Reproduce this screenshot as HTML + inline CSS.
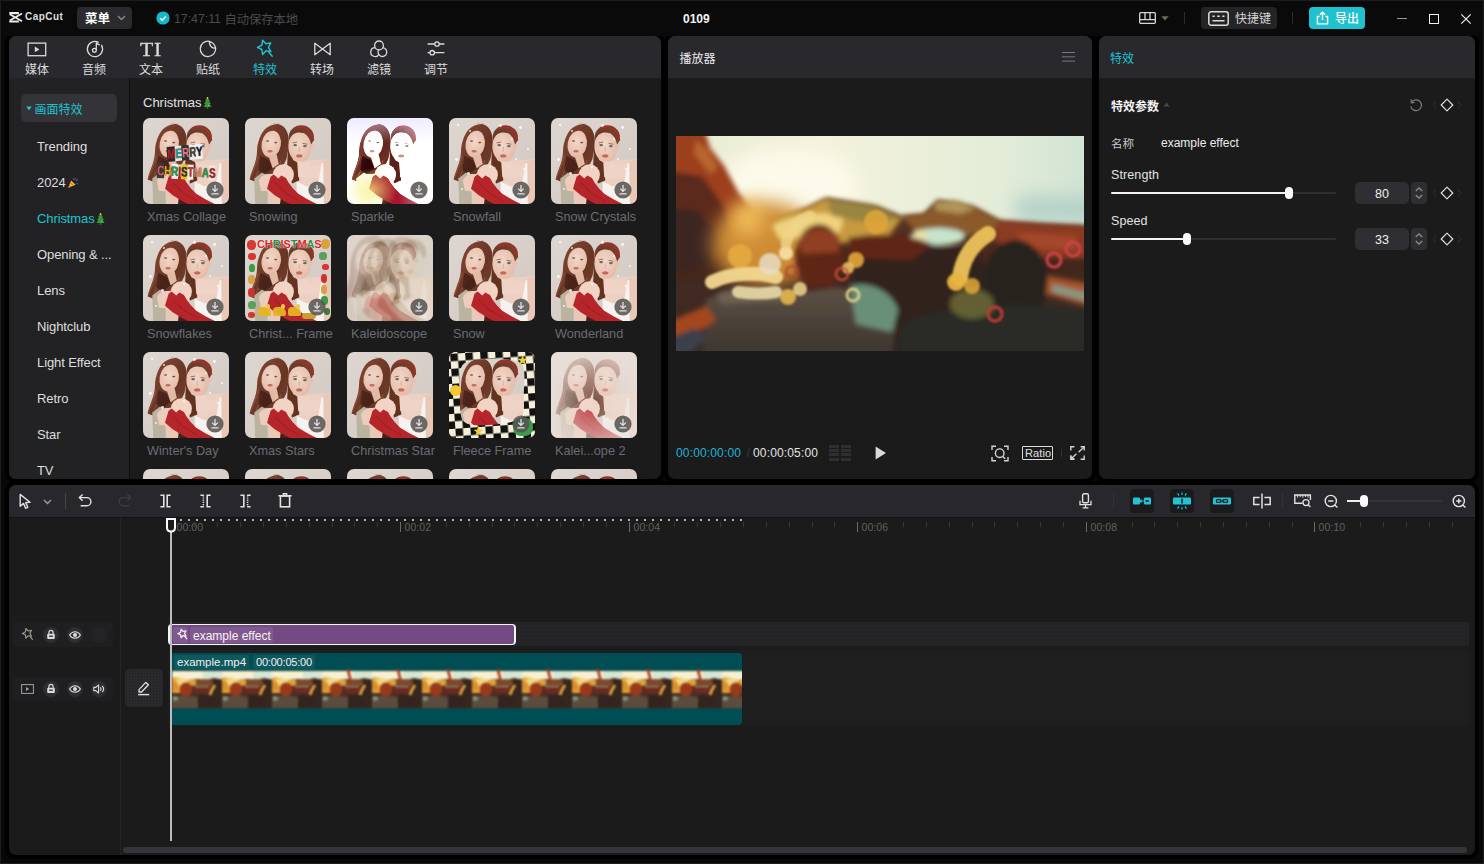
<!DOCTYPE html>
<html lang="zh"><head><meta charset="utf-8"><title>CapCut</title>
<style>
*{box-sizing:border-box;margin:0;padding:0}
html,body{width:1484px;height:864px;overflow:hidden;background:#080808}
body{position:relative;font-family:"Liberation Sans","Noto Sans CJK SC",sans-serif;font-size:13px;color:#e6e6e6;-webkit-font-smoothing:antialiased}
.abs{position:absolute}
.t{position:absolute;white-space:nowrap;line-height:1}
.cjk{font-family:"Liberation Sans","Noto Sans CJK SC",sans-serif}
svg{position:absolute;overflow:visible}
#titlebar{left:0;top:0;width:1484px;height:36px;background:#0a0a0a;z-index:5}
#frame{left:0;top:0;width:1484px;height:864px;border:1px solid #1d1d1d;border-top:1px solid #1c1c1c;pointer-events:none;z-index:50}
.panel{position:absolute;background:#1b1b1c;border-radius:7px;overflow:hidden;box-shadow:0 0 0 4px #000}
.phead{position:absolute;left:0;top:0;right:0;height:42px;background:#29292d}
.cy{color:#21c3d3}
</style></head><body>

<div id="titlebar" class="abs">
  <svg style="left:8.600px;top:11.600px" width="14" height="11" viewBox="0 0 14 11"><path d="M0.300 1.100h9.600M0.300 9.500h9.600" stroke="#ececec" stroke-width="2.200" fill="none"/><path d="M0.800 2.200L13 9.200M0.800 8.400L13 1.400" stroke="#ececec" stroke-width="1.700" fill="none"/></svg>
  <div class="t" style="left:25px;top:12.300px;font-size:10px;font-weight:700;color:#dedede;letter-spacing:0.450px">CapCut</div>
  <div class="abs" style="left:77px;top:7px;width:55px;height:22px;background:#2b2b2f;border-radius:4px"></div>
  <div class="t cjk" style="left:85px;top:13px;font-size:12.500px;font-weight:700;color:#fff">菜单</div>
  <svg style="left:117px;top:15px" width="9" height="6" viewBox="0 0 9 6"><path d="M1 1l3.5 3.5L8 1" fill="none" stroke="#8a8a8e" stroke-width="1.4"/></svg>
  <svg style="left:156px;top:11px" width="14" height="14" viewBox="0 0 14 14"><circle cx="7" cy="7" r="6.6" fill="#17b9cb"/><path d="M4.2 7.2l2 2 3.6-3.8" fill="none" stroke="#fff" stroke-width="1.4"/></svg>
  <div class="t" style="left:174px;top:12.500px;font-size:12.300px;color:#4b4b50">17:47:11 <span class="cjk" style="position:relative;top:1px">自动保存本地</span></div>
  <div class="t" style="left:683px;top:13.200px;font-size:12px;font-weight:700;color:#f2f2f2">0109</div>
  <!-- layout icon -->
  <svg style="left:1139px;top:12px" width="17" height="12" viewBox="0 0 17 12"><rect x="0.7" y="0.7" width="15.6" height="10.6" rx="1" fill="none" stroke="#d8d8d8" stroke-width="1.3"/><path d="M0.700 7.600h15.600M6 0.700v6.900M11 0.700v6.900" stroke="#d8d8d8" stroke-width="1.3" fill="none"/></svg>
  <svg style="left:1161px;top:16px" width="8" height="5" viewBox="0 0 8 5"><path d="M0.3 0.3h7.4L4 4.6z" fill="#6f6a55"/></svg>
  <div class="abs" style="left:1184px;top:12px;width:1px;height:12px;background:#2c2c2c"></div>
  <div class="abs" style="left:1201px;top:7px;width:76px;height:22px;background:#242427;border-radius:4px"></div>
  <svg style="left:1208px;top:11px" width="21" height="15" viewBox="0 0 21 15"><rect x="0.8" y="0.8" width="19.4" height="13.4" rx="2.3" fill="none" stroke="#dcdcdc" stroke-width="1.5"/><path d="M4.5 5.3h2.2M9.2 5.3h2.6M14.3 5.3h2.2M4.5 9.7h12" stroke="#dcdcdc" stroke-width="1.5" fill="none"/></svg>
  <div class="t cjk" style="left:1235px;top:13px;font-size:12px;color:#d4d4d4">快捷键</div>
  <div class="abs" style="left:1292px;top:12px;width:1px;height:12px;background:#2c2c2c"></div>
  <div class="abs" style="left:1309px;top:7px;width:56px;height:22px;background:#1fc0cf;border-radius:4px"></div>
  <svg style="left:1316px;top:11px" width="13" height="14" viewBox="0 0 13 14"><path d="M3.5 5.5H1.4v7.4h10.2V5.5H9.5" fill="none" stroke="#fff" stroke-width="1.4"/><path d="M6.5 9V1.5M3.8 3.8L6.5 1.2l2.7 2.6" fill="none" stroke="#fff" stroke-width="1.4"/></svg>
  <div class="t cjk" style="left:1335px;top:13px;font-size:12px;color:#fff;font-weight:500">导出</div>
  <div class="abs" style="left:1397px;top:18px;width:10px;height:1px;background:#9a9a9a"></div>
  <div class="abs" style="left:1429px;top:14px;width:10px;height:10px;border:1.3px solid #f0f0f0"></div>
  <svg style="left:1461px;top:14px" width="10" height="10" viewBox="0 0 10 10"><path d="M0.3 0.3l9.4 9.4M9.7 0.3L0.3 9.7" stroke="#f0f0f0" stroke-width="1.2"/></svg>
</div>
<div id="frame" class="abs"></div>


<svg width="0" height="0" style="position:absolute"><defs>
<linearGradient id="gbg" x1="0" y1="0" x2="1" y2="1"><stop offset="0" stop-color="#ded6d0"/><stop offset="1" stop-color="#d2c8c2"/></linearGradient>
<linearGradient id="gh1" x1="0" y1="0" x2="1" y2="1"><stop offset="0" stop-color="#8a4c36"/><stop offset="0.6" stop-color="#683424"/><stop offset="1" stop-color="#7a4530"/></linearGradient>
<radialGradient id="gsk" cx="0.45" cy="0.4" r="0.7"><stop offset="0" stop-color="#f3d6c8"/><stop offset="1" stop-color="#e2b8a4"/></radialGradient>
<symbol id="girl" viewBox="0 0 86 86">
<rect width="86" height="86" fill="url(#gbg)"/>
<path d="M53 43L86 41V86H50z" fill="#ecd0c2"/>
<ellipse cx="56" cy="19.500" rx="12.300" ry="11.500" fill="#70402c"/>
<path d="M43.500 20l4.500 22 5 3 1 17-7 3-5-14z" fill="#63331f"/>
<path d="M50 11.200C57 7.600 66 11.500 67.600 22.500" fill="none" stroke="#a82c28" stroke-width="2" stroke-linecap="round"/>
<ellipse cx="54.500" cy="29.300" rx="11.200" ry="15" fill="url(#gsk)" transform="rotate(-5 54.500 29.300)"/>
<path d="M44.500 22c2-6 8-8 14-6l-2-3-8 0-4 4z" fill="#6b3a28"/>
<circle cx="66.300" cy="29" r="1.800" fill="#e6bfae"/>
<path d="M52 43.500l9 0.500 5 5 20-6v16H53z" fill="#eed3c6"/>
<path d="M76 44L86 41v45H77z" fill="#e9c8b8"/>
<path d="M51.400 63l10 5 11-3 3.500-20 1.600 0.300L78 86H52z" fill="#f5f2f0"/>
<path d="M28 6.500c8-0.800 14.500 4 15.500 13.500l-0.500 13-1.500 8-4 8-8 6-9 2-6 3-4 3-5-2c2-9 6-15 7-24 0.500-5 0-9 2-14 3-9 7-16 21-16.500z" fill="url(#gh1)"/>
<path d="M14 38c-2 8-5 14-8 22M18 40c-1 8-4 12-6 18M36 42c0 4-2 6-4 8" stroke="#9a6248" stroke-width="0.900" fill="none" opacity=".7"/>
<path d="M10 60l8-6 6 3-1 29H11z" fill="#b9b39f"/>
<ellipse cx="26.600" cy="26.500" rx="9.400" ry="13.200" fill="url(#gsk)" transform="rotate(10 26.600 26.500)"/>
<path d="M16 38l8 4 4 8-8 6-6-4z" fill="#3f1d15" opacity=".75"/><path d="M24 38l8-1 2 9-6 4z" fill="#e3baa6"/>
<ellipse cx="34" cy="72" rx="11" ry="18" fill="#ebc8b6" transform="rotate(4 34 72)"/>
<circle cx="38.500" cy="56.500" r="10.300" fill="#f2d3c4"/>
<path d="M14.500 62c2-5 8-7 13-6l4 9-5 8-10-1z" fill="#edccbc"/>
<path d="M36 78h14l2 9H35z" fill="#47201a"/>
<path d="M26 58.500L29 56.200 33.500 60 36.500 57.200 41 59.500 43.500 64 47.500 69.500 53 75 62 80.500 74 86.500H48L40 82.500 30 76.500 22.500 70z" fill="#b6252a"/>
<path d="M30 64l10 10 14 8" stroke="#8e1c22" stroke-width="1" fill="none" opacity=".55"/>
<ellipse cx="50" cy="27.500" rx="1.800" ry="1.100" fill="#5b6e66"/><ellipse cx="59.500" cy="28.500" rx="1.800" ry="1.100" fill="#5b6e66"/>
<path d="M47.500 25.300l4.500-0.800M57.300 25.800l4.500 0.800" stroke="#7a4a38" stroke-width="0.700"/>
<ellipse cx="54" cy="38" rx="3" ry="1.500" fill="#c8665b"/>
<path d="M54 29v5" stroke="#dcae9a" stroke-width="1"/>
<ellipse cx="23" cy="23.500" rx="1.600" ry="0.800" fill="#6e5244"/><ellipse cx="31" cy="25" rx="1.500" ry="0.800" fill="#6e5244"/>
<ellipse cx="25.500" cy="33.500" rx="2.600" ry="1.200" fill="#c8695d"/>
</symbol>
<symbol id="dl" viewBox="0 0 18 18"><circle cx="9" cy="9" r="8.600" fill="#55524f" fill-opacity="0.860"/><path d="M9 4v6M6.200 7.600L9 10.400l2.800-2.800M5.400 12.800h7.200" fill="none" stroke="#e2e2e2" stroke-width="1.300"/></symbol>
</defs></svg><div class="panel" style="left:9px;top:36px;width:652px;height:443px"><div class="phead"></div><svg style="left:18px;top:5.5px" width="20" height="15" viewBox="0 0 20 15"><rect x="1.1" y="1.1" width="17.6" height="12.6" fill="none" stroke="#dadada" stroke-width="1.3"/><path d="M7.8 4.6v5.6l4.6-2.8z" fill="#dadada"/></svg><svg style="left:76px;top:3px" width="20" height="20" viewBox="0 0 20 20"><path d="M13.2 3.2A7.6 7.6 0 1 0 16.6 6.4" fill="none" stroke="#dadada" stroke-width="1.3" stroke-linecap="round"/><circle cx="9.4" cy="11.2" r="1.9" fill="none" stroke="#dadada" stroke-width="1.3"/><path d="M11.3 11.2V3.4c0.8 1.6 2 2.2 3.6 2.4" fill="none" stroke="#dadada" stroke-width="1.3"/></svg><div class="t" style="left:131px;top:3.100px;font-family:'Liberation Serif',serif;font-size:18.600px;color:#dadada;letter-spacing:0.800px;line-height:22px;transform:scaleX(1.160);transform-origin:0 0;-webkit-text-stroke:0.300px #dadada">TI</div><svg style="left:189px;top:3px" width="20" height="20" viewBox="0 0 20 20"><path d="M11.2 2.3A7.7 7.7 0 1 0 17.6 9" fill="none" stroke="#dadada" stroke-width="1.3"/><path d="M11.2 2.3c2.8 0.6 5.6 3.4 6.4 6.7-3.4 0.6-6.2-1.8-6.4-6.7z" fill="none" stroke="#dadada" stroke-width="1.3" stroke-linejoin="round"/></svg><svg style="left:245px;top:2px" width="22" height="22" viewBox="0 0 22 22"><path d="M8.6 2.2l3.3 3.6 4.9-0.9-2.3 4.4 2.4 4.3-4.9-0.8-3.4 3.6-0.7-4.9-4.5-2.1 4.5-2.2z" fill="none" stroke="#1fc3d3" stroke-width="1.4" stroke-linejoin="round"/><path d="M14.8 14.2l3.4 4" stroke="#1fc3d3" stroke-width="1.4" stroke-linecap="round"/></svg><svg style="left:304px;top:5px" width="19" height="16" viewBox="0 0 19 16"><path d="M1.8 2.2v11.6l7.7-5.8zM17.2 2.2v11.6L9.5 8z" fill="none" stroke="#dadada" stroke-width="1.3" stroke-linejoin="round"/></svg><svg style="left:360px;top:2px" width="20" height="20" viewBox="0 0 20 20"><circle cx="10" cy="7.4" r="4.4" fill="none" stroke="#dadada" stroke-width="1.3"/><path d="M6.2 9.7A4.4 4.4 0 1 0 10 16.2" fill="none" stroke="#dadada" stroke-width="1.3"/><path d="M13.8 9.7A4.4 4.4 0 1 1 10 11.3" fill="none" stroke="#dadada" stroke-width="1.3"/></svg><svg style="left:417px;top:3px" width="20" height="20" viewBox="0 0 20 20"><path d="M1.6 5h7.2M13.2 5h5.2M1.6 13.7h2.4M8.4 13.7h10" stroke="#dadada" stroke-width="1.3" fill="none"/><circle cx="11" cy="5" r="2.2" fill="none" stroke="#dadada" stroke-width="1.3"/><circle cx="6.2" cy="13.7" r="2.2" fill="none" stroke="#dadada" stroke-width="1.3"/></svg><div class="t cjk" style="left:16px;top:28px;font-size:12px;color:#dcdcdc;width:24px;text-align:center">媒体</div><div class="t cjk" style="left:73px;top:28px;font-size:12px;color:#dcdcdc;width:24px;text-align:center">音频</div><div class="t cjk" style="left:130px;top:28px;font-size:12px;color:#dcdcdc;width:24px;text-align:center">文本</div><div class="t cjk" style="left:187px;top:28px;font-size:12px;color:#dcdcdc;width:24px;text-align:center">贴纸</div><div class="t cjk" style="left:244px;top:28px;font-size:12px;color:#21c3d3;width:24px;text-align:center">特效</div><div class="t cjk" style="left:301px;top:28px;font-size:12px;color:#dcdcdc;width:24px;text-align:center">转场</div><div class="t cjk" style="left:358px;top:28px;font-size:12px;color:#dcdcdc;width:24px;text-align:center">滤镜</div><div class="t cjk" style="left:415px;top:28px;font-size:12px;color:#dcdcdc;width:24px;text-align:center">调节</div><div class="abs" style="left:0;top:42px;width:120px;height:401px;background:#222225"></div><div class="abs" style="left:120px;top:42px;width:1px;height:401px;background:#0e0e0f"></div><div class="abs" style="left:12px;top:58px;width:96px;height:28px;background:#333338;border-radius:5px"></div><svg style="left:17px;top:70px" width="6" height="5" viewBox="0 0 6 5"><path d="M0.3 0.5h5.4L3 4.6z" fill="#21c3d3"/></svg><div class="t cjk cy" style="left:25.500px;top:67.500px;font-size:12px">画面特效</div><div class="t" style="left:28px;top:103.3px;font-size:13px;color:#dedede;line-height:15px;letter-spacing:-0.100px">Trending</div><div class="t" style="left:28px;top:139.3px;font-size:13px;color:#dedede;line-height:15px;letter-spacing:-0.100px">2024<svg style="position:relative;display:inline-block;vertical-align:-2px;margin-left:1px" width="12" height="12" viewBox="0 0 12 12"><path d="M1 11L4.2 3.4l4.4 4.4z" fill="#f2b632"/><path d="M2.2 8.2l1.6 1.6M3.3 5.6l3 3" stroke="#d9542b" stroke-width="0.9"/><path d="M6.5 1.2l0.8 2M9 3.5l2-0.8M9.6 6.4l1.6 0.6" stroke="#3b7de0" stroke-width="1"/><circle cx="8.6" cy="1.6" r="0.7" fill="#e23b3b"/></svg></div><div class="t" style="left:28px;top:175.3px;font-size:13px;color:#21c3d3;line-height:15px;letter-spacing:-0.100px">Christmas<svg style="position:relative;display:inline-block;vertical-align:-2px;margin-left:1px" width="9" height="12" viewBox="0 0 9 12"><path d="M4.5 0.5L7 4H6l2 3H6.6L8.6 10H0.4L2.4 7H1l2-3H2z" fill="#2f9a3f"/><rect x="3.6" y="10" width="1.8" height="1.8" fill="#7a4a22"/><circle cx="4.5" cy="1" r="0.9" fill="#f4c531"/><circle cx="3.4" cy="5.6" r="0.6" fill="#e23b3b"/><circle cx="5.8" cy="8.3" r="0.6" fill="#f4c531"/></svg></div><div class="t" style="left:28px;top:211.3px;font-size:13px;color:#dedede;line-height:15px;letter-spacing:-0.100px">Opening &amp; ...</div><div class="t" style="left:28px;top:247.3px;font-size:13px;color:#dedede;line-height:15px;letter-spacing:-0.100px">Lens</div><div class="t" style="left:28px;top:283.3px;font-size:13px;color:#dedede;line-height:15px;letter-spacing:-0.100px">Nightclub</div><div class="t" style="left:28px;top:319.3px;font-size:13px;color:#dedede;line-height:15px;letter-spacing:-0.100px">Light Effect</div><div class="t" style="left:28px;top:355.3px;font-size:13px;color:#dedede;line-height:15px;letter-spacing:-0.100px">Retro</div><div class="t" style="left:28px;top:391.3px;font-size:13px;color:#dedede;line-height:15px;letter-spacing:-0.100px">Star</div><div class="t" style="left:28px;top:427.3px;font-size:13px;color:#dedede;line-height:15px;letter-spacing:-0.100px">TV</div><div class="t" style="left:134px;top:59px;font-size:13px;color:#e2e2e2;line-height:15px">Christmas<svg style="position:relative;display:inline-block;vertical-align:-2px;margin-left:1px" width="9" height="12" viewBox="0 0 9 12"><path d="M4.5 0.5L7 4H6l2 3H6.6L8.6 10H0.4L2.4 7H1l2-3H2z" fill="#2f9a3f"/><rect x="3.6" y="10" width="1.8" height="1.8" fill="#7a4a22"/><circle cx="4.5" cy="1" r="0.9" fill="#f4c531"/><circle cx="3.4" cy="5.6" r="0.6" fill="#e23b3b"/><circle cx="5.8" cy="8.3" r="0.6" fill="#f4c531"/></svg></div><div class="abs" style="left:134px;top:82px;width:86px;height:86px;overflow:hidden;border-radius:7px 7px 7px 7px"><svg style="left:-1px;top:-1px;filter:blur(0.550px)" width="88" height="88"><use href="#girl" width="88" height="88"/></svg><div class="t" style="left:24px;top:29.500px;font-size:13.500px;font-weight:700;line-height:13px;transform:scaleX(0.740) rotate(-4deg);transform-origin:0 50%;text-shadow:0 0 1px #222"><span style="color:#b8222a;background:#2a2a2a">M</span><span style="color:#2a9a9a;background:#f0e8e0">E</span><span style="color:#e07a8a;background:#333">R</span><span style="color:#444;background:#eee">R</span><span style="color:#1c2230;background:#f2f2f2">Y</span></div><div class="t" style="left:14px;top:46px;font-size:13.500px;font-weight:700;line-height:13px;transform:scaleX(0.730) rotate(2deg);transform-origin:0 50%;text-shadow:0 0 1px #222"><span style="color:#e0596a;background:#3a3a3a">C</span><span style="color:#e9b21f">H</span><span style="color:#2a9a4a;background:#eee">R</span><span style="color:#c22">I</span><span style="color:#333;background:#e9c51f">S</span><span style="color:#c33;background:#eee">T</span><span style="color:#e8866a">M</span><span style="color:#2a9a4a">A</span><span style="color:#b22;background:#f0e8e0">S</span></div><svg style="left:63px;top:63px" width="18" height="18"><use href="#dl" width="18" height="18"/></svg></div><div class="t" style="left:138px;top:174px;font-size:12.700px;color:#6b6b73;line-height:15px">Xmas Collage</div><div class="abs" style="left:236px;top:82px;width:86px;height:86px;overflow:hidden;border-radius:7px 7px 7px 7px"><svg style="left:-1px;top:-1px;filter:blur(0.550px)" width="88" height="88"><use href="#girl" width="88" height="88"/></svg><svg style="left:63px;top:63px" width="18" height="18"><use href="#dl" width="18" height="18"/></svg></div><div class="t" style="left:240px;top:174px;font-size:12.700px;color:#6b6b73;line-height:15px">Snowing</div><div class="abs" style="left:338px;top:82px;width:86px;height:86px;overflow:hidden;border-radius:7px 7px 7px 7px"><svg style="left:-1px;top:-1px;filter:blur(0.500px) contrast(1.400) brightness(1.360) saturate(0.550) hue-rotate(-8deg)" width="88" height="88"><use href="#girl" width="88" height="88"/></svg><div class="abs" style="left:0;top:0;width:86px;height:86px;border-radius:7px;background:radial-gradient(ellipse 26px 22px at 24px 72px,rgba(248,240,130,.750),transparent),linear-gradient(180deg,rgba(225,215,255,.500),transparent 30%),linear-gradient(90deg,transparent 60%,rgba(255,255,255,.600))"></div><svg style="left:63px;top:63px" width="18" height="18"><use href="#dl" width="18" height="18"/></svg></div><div class="t" style="left:342px;top:174px;font-size:12.700px;color:#6b6b73;line-height:15px">Sparkle</div><div class="abs" style="left:440px;top:82px;width:86px;height:86px;overflow:hidden;border-radius:7px 7px 7px 7px"><svg style="left:-1px;top:-1px;filter:blur(0.550px)" width="88" height="88"><use href="#girl" width="88" height="88"/></svg><div class="abs" style="left:8px;top:6px;width:1.5px;height:1.5px;border-radius:50%;background:rgba(255,255,255,.800)"></div><div class="abs" style="left:20px;top:12px;width:2.2px;height:2.2px;border-radius:50%;background:rgba(255,255,255,.800)"></div><div class="abs" style="left:70px;top:8px;width:2.9px;height:2.9px;border-radius:50%;background:rgba(255,255,255,.800)"></div><div class="abs" style="left:62px;top:20px;width:1.5px;height:1.5px;border-radius:50%;background:rgba(255,255,255,.800)"></div><div class="abs" style="left:78px;top:30px;width:2.2px;height:2.2px;border-radius:50%;background:rgba(255,255,255,.800)"></div><div class="abs" style="left:6px;top:40px;width:2.9px;height:2.9px;border-radius:50%;background:rgba(255,255,255,.800)"></div><div class="abs" style="left:74px;top:50px;width:1.5px;height:1.5px;border-radius:50%;background:rgba(255,255,255,.800)"></div><div class="abs" style="left:12px;top:70px;width:2.2px;height:2.2px;border-radius:50%;background:rgba(255,255,255,.800)"></div><div class="abs" style="left:50px;top:6px;width:2.9px;height:2.9px;border-radius:50%;background:rgba(255,255,255,.800)"></div><div class="abs" style="left:40px;top:48px;width:1.5px;height:1.5px;border-radius:50%;background:rgba(255,255,255,.800)"></div><div class="abs" style="left:66px;top:40px;width:2.2px;height:2.2px;border-radius:50%;background:rgba(255,255,255,.800)"></div><div class="abs" style="left:18px;top:54px;width:2.9px;height:2.9px;border-radius:50%;background:rgba(255,255,255,.800)"></div><svg style="left:63px;top:63px" width="18" height="18"><use href="#dl" width="18" height="18"/></svg></div><div class="t" style="left:444px;top:174px;font-size:12.700px;color:#6b6b73;line-height:15px">Snowfall</div><div class="abs" style="left:542px;top:82px;width:86px;height:86px;overflow:hidden;border-radius:7px 7px 7px 7px"><svg style="left:-1px;top:-1px;filter:blur(0.550px)" width="88" height="88"><use href="#girl" width="88" height="88"/></svg><div class="abs" style="left:8px;top:6px;width:1.5px;height:1.5px;border-radius:50%;background:rgba(255,255,255,.800)"></div><div class="abs" style="left:20px;top:12px;width:2.2px;height:2.2px;border-radius:50%;background:rgba(255,255,255,.800)"></div><div class="abs" style="left:70px;top:8px;width:2.9px;height:2.9px;border-radius:50%;background:rgba(255,255,255,.800)"></div><div class="abs" style="left:62px;top:20px;width:1.5px;height:1.5px;border-radius:50%;background:rgba(255,255,255,.800)"></div><div class="abs" style="left:78px;top:30px;width:2.2px;height:2.2px;border-radius:50%;background:rgba(255,255,255,.800)"></div><div class="abs" style="left:6px;top:40px;width:2.9px;height:2.9px;border-radius:50%;background:rgba(255,255,255,.800)"></div><div class="abs" style="left:74px;top:50px;width:1.5px;height:1.5px;border-radius:50%;background:rgba(255,255,255,.800)"></div><div class="abs" style="left:12px;top:70px;width:2.2px;height:2.2px;border-radius:50%;background:rgba(255,255,255,.800)"></div><div class="abs" style="left:50px;top:6px;width:2.9px;height:2.9px;border-radius:50%;background:rgba(255,255,255,.800)"></div><div class="abs" style="left:40px;top:48px;width:1.5px;height:1.5px;border-radius:50%;background:rgba(255,255,255,.800)"></div><div class="abs" style="left:66px;top:40px;width:2.2px;height:2.2px;border-radius:50%;background:rgba(255,255,255,.800)"></div><div class="abs" style="left:18px;top:54px;width:2.9px;height:2.9px;border-radius:50%;background:rgba(255,255,255,.800)"></div><svg style="left:63px;top:63px" width="18" height="18"><use href="#dl" width="18" height="18"/></svg></div><div class="t" style="left:546px;top:174px;font-size:12.700px;color:#6b6b73;line-height:15px">Snow Crystals</div><div class="abs" style="left:134px;top:199px;width:86px;height:86px;overflow:hidden;border-radius:7px 7px 7px 7px"><svg style="left:-1px;top:-1px;filter:blur(0.550px)" width="88" height="88"><use href="#girl" width="88" height="88"/></svg><div class="abs" style="left:8px;top:6px;width:1.5px;height:1.5px;border-radius:50%;background:rgba(255,255,255,.800)"></div><div class="abs" style="left:20px;top:12px;width:2.2px;height:2.2px;border-radius:50%;background:rgba(255,255,255,.800)"></div><div class="abs" style="left:70px;top:8px;width:2.9px;height:2.9px;border-radius:50%;background:rgba(255,255,255,.800)"></div><div class="abs" style="left:62px;top:20px;width:1.5px;height:1.5px;border-radius:50%;background:rgba(255,255,255,.800)"></div><div class="abs" style="left:78px;top:30px;width:2.2px;height:2.2px;border-radius:50%;background:rgba(255,255,255,.800)"></div><div class="abs" style="left:6px;top:40px;width:2.9px;height:2.9px;border-radius:50%;background:rgba(255,255,255,.800)"></div><div class="abs" style="left:74px;top:50px;width:1.5px;height:1.5px;border-radius:50%;background:rgba(255,255,255,.800)"></div><div class="abs" style="left:12px;top:70px;width:2.2px;height:2.2px;border-radius:50%;background:rgba(255,255,255,.800)"></div><div class="abs" style="left:50px;top:6px;width:2.9px;height:2.9px;border-radius:50%;background:rgba(255,255,255,.800)"></div><div class="abs" style="left:40px;top:48px;width:1.5px;height:1.5px;border-radius:50%;background:rgba(255,255,255,.800)"></div><div class="abs" style="left:66px;top:40px;width:2.2px;height:2.2px;border-radius:50%;background:rgba(255,255,255,.800)"></div><div class="abs" style="left:18px;top:54px;width:2.9px;height:2.9px;border-radius:50%;background:rgba(255,255,255,.800)"></div><svg style="left:63px;top:63px" width="18" height="18"><use href="#dl" width="18" height="18"/></svg></div><div class="t" style="left:138px;top:291px;font-size:12.700px;color:#6b6b73;line-height:15px">Snowflakes</div><div class="abs" style="left:236px;top:199px;width:86px;height:86px;overflow:hidden;border-radius:7px 7px 7px 7px"><svg style="left:-1px;top:-1px;filter:blur(0.550px)" width="88" height="88"><use href="#girl" width="88" height="88"/></svg><div class="t" style="left:12px;top:3.500px;font-size:11px;font-weight:700;letter-spacing:-0.100px;line-height:11px;text-shadow:0 0 1px #fff,0 0 1px #fff"><span style="color:#d42a26">CH</span><span style="color:#2f8a3f">R</span><span style="color:#d42a26">I</span><span style="color:#d42a26">S</span><span style="color:#2f8a3f">T</span><span style="color:#d42a26">M</span><span style="color:#2f8a3f">A</span><span style="color:#d42a26">S</span></div><div class="abs" style="left:2px;top:5px;width:9px;height:10px;border-radius:45%;background:#d63a34"></div><div class="abs" style="left:3px;top:18px;width:8px;height:7px;border-radius:45%;background:#d8352f"></div><div class="abs" style="left:4px;top:29px;width:6px;height:8px;border-radius:45%;background:#3d9a45"></div><div class="abs" style="left:3px;top:40px;width:7px;height:9px;border-radius:45%;background:#d9a04a"></div><div class="abs" style="left:3px;top:53px;width:7px;height:9px;border-radius:45%;background:#c9342f"></div><div class="abs" style="left:3px;top:66px;width:8px;height:8px;border-radius:45%;background:#5aa05a"></div><div class="abs" style="left:3px;top:77px;width:7px;height:6px;border-radius:45%;background:#d8352f"></div><div class="abs" style="left:76px;top:4px;width:9px;height:10px;border-radius:45%;background:#d9a23a"></div><div class="abs" style="left:74px;top:17px;width:8px;height:8px;border-radius:45%;background:#5aa05a"></div><div class="abs" style="left:77px;top:29px;width:7px;height:6px;border-radius:45%;background:#d8352f"></div><div class="abs" style="left:76px;top:39px;width:6px;height:9px;border-radius:45%;background:#c9342f"></div><div class="abs" style="left:76px;top:50px;width:6px;height:9px;border-radius:45%;background:#d9a04a"></div><div class="abs" style="left:76px;top:61px;width:7px;height:9px;border-radius:45%;background:#3d9a45"></div><div class="abs" style="left:79px;top:73px;width:6px;height:7px;border-radius:45%;background:#3d7a3d"></div><div class="abs" style="left:13px;top:72px;width:13px;height:9px;border-radius:4px 6px 2px 2px;background:#e6b422;opacity:.950"></div><div class="abs" style="left:21px;top:69px;width:4px;height:5px;border-radius:2px;background:#efc94a"></div><div class="abs" style="left:28px;top:72px;width:13px;height:9px;border-radius:4px 6px 2px 2px;background:#e6b422;opacity:.950"></div><div class="abs" style="left:36px;top:69px;width:4px;height:5px;border-radius:2px;background:#efc94a"></div><div class="abs" style="left:43px;top:72px;width:13px;height:9px;border-radius:4px 6px 2px 2px;background:#e6b422;opacity:.950"></div><div class="abs" style="left:51px;top:69px;width:4px;height:5px;border-radius:2px;background:#efc94a"></div><div class="abs" style="left:57px;top:78px;width:14px;height:6px;border-radius:3px;background:#c9a030"></div><svg style="left:63px;top:63px" width="18" height="18"><use href="#dl" width="18" height="18"/></svg></div><div class="t" style="left:240px;top:291px;font-size:12.700px;color:#6b6b73;line-height:15px">Christ... Frame</div><div class="abs" style="left:338px;top:199px;width:86px;height:86px;overflow:hidden;border-radius:7px 7px 7px 7px"><svg style="left:-1px;top:-1px;filter:blur(0.550px)" width="88" height="88"><use href="#girl" width="88" height="88"/></svg><svg style="left:-12px;top:-8px;opacity:.450;filter:blur(0.800px)" width="104" height="104"><use href="#girl" width="104" height="104"/></svg><svg style="left:6px;top:-4px;opacity:.300;filter:blur(0.800px) hue-rotate(60deg)" width="92" height="92"><use href="#girl" width="92" height="92"/></svg><div class="abs" style="left:0;top:0;width:86px;height:86px;border-radius:7px;background:rgba(228,212,202,.380)"></div><svg style="left:63px;top:63px" width="18" height="18"><use href="#dl" width="18" height="18"/></svg></div><div class="t" style="left:342px;top:291px;font-size:12.700px;color:#6b6b73;line-height:15px">Kaleidoscope</div><div class="abs" style="left:440px;top:199px;width:86px;height:86px;overflow:hidden;border-radius:7px 7px 7px 7px"><svg style="left:-1px;top:-1px;filter:blur(0.550px)" width="88" height="88"><use href="#girl" width="88" height="88"/></svg><svg style="left:63px;top:63px" width="18" height="18"><use href="#dl" width="18" height="18"/></svg></div><div class="t" style="left:444px;top:291px;font-size:12.700px;color:#6b6b73;line-height:15px">Snow</div><div class="abs" style="left:542px;top:199px;width:86px;height:86px;overflow:hidden;border-radius:7px 7px 7px 7px"><svg style="left:-1px;top:-1px;filter:blur(0.550px)" width="88" height="88"><use href="#girl" width="88" height="88"/></svg><div class="abs" style="left:8px;top:6px;width:1.5px;height:1.5px;border-radius:50%;background:rgba(255,255,255,.800)"></div><div class="abs" style="left:20px;top:12px;width:2.2px;height:2.2px;border-radius:50%;background:rgba(255,255,255,.800)"></div><div class="abs" style="left:70px;top:8px;width:2.9px;height:2.9px;border-radius:50%;background:rgba(255,255,255,.800)"></div><div class="abs" style="left:62px;top:20px;width:1.5px;height:1.5px;border-radius:50%;background:rgba(255,255,255,.800)"></div><div class="abs" style="left:78px;top:30px;width:2.2px;height:2.2px;border-radius:50%;background:rgba(255,255,255,.800)"></div><div class="abs" style="left:6px;top:40px;width:2.9px;height:2.9px;border-radius:50%;background:rgba(255,255,255,.800)"></div><div class="abs" style="left:74px;top:50px;width:1.5px;height:1.5px;border-radius:50%;background:rgba(255,255,255,.800)"></div><div class="abs" style="left:12px;top:70px;width:2.2px;height:2.2px;border-radius:50%;background:rgba(255,255,255,.800)"></div><div class="abs" style="left:50px;top:6px;width:2.9px;height:2.9px;border-radius:50%;background:rgba(255,255,255,.800)"></div><div class="abs" style="left:40px;top:48px;width:1.5px;height:1.5px;border-radius:50%;background:rgba(255,255,255,.800)"></div><div class="abs" style="left:66px;top:40px;width:2.2px;height:2.2px;border-radius:50%;background:rgba(255,255,255,.800)"></div><div class="abs" style="left:18px;top:54px;width:2.9px;height:2.9px;border-radius:50%;background:rgba(255,255,255,.800)"></div><svg style="left:63px;top:63px" width="18" height="18"><use href="#dl" width="18" height="18"/></svg></div><div class="t" style="left:546px;top:291px;font-size:12.700px;color:#6b6b73;line-height:15px">Wonderland</div><div class="abs" style="left:134px;top:316px;width:86px;height:86px;overflow:hidden;border-radius:7px 7px 7px 7px"><svg style="left:-1px;top:-1px;filter:blur(0.550px)" width="88" height="88"><use href="#girl" width="88" height="88"/></svg><div class="abs" style="left:8px;top:6px;width:1.5px;height:1.5px;border-radius:50%;background:rgba(255,255,255,.800)"></div><div class="abs" style="left:20px;top:12px;width:2.2px;height:2.2px;border-radius:50%;background:rgba(255,255,255,.800)"></div><div class="abs" style="left:70px;top:8px;width:2.9px;height:2.9px;border-radius:50%;background:rgba(255,255,255,.800)"></div><div class="abs" style="left:62px;top:20px;width:1.5px;height:1.5px;border-radius:50%;background:rgba(255,255,255,.800)"></div><div class="abs" style="left:78px;top:30px;width:2.2px;height:2.2px;border-radius:50%;background:rgba(255,255,255,.800)"></div><div class="abs" style="left:6px;top:40px;width:2.9px;height:2.9px;border-radius:50%;background:rgba(255,255,255,.800)"></div><div class="abs" style="left:74px;top:50px;width:1.5px;height:1.5px;border-radius:50%;background:rgba(255,255,255,.800)"></div><div class="abs" style="left:12px;top:70px;width:2.2px;height:2.2px;border-radius:50%;background:rgba(255,255,255,.800)"></div><div class="abs" style="left:50px;top:6px;width:2.9px;height:2.9px;border-radius:50%;background:rgba(255,255,255,.800)"></div><div class="abs" style="left:40px;top:48px;width:1.5px;height:1.5px;border-radius:50%;background:rgba(255,255,255,.800)"></div><div class="abs" style="left:66px;top:40px;width:2.2px;height:2.2px;border-radius:50%;background:rgba(255,255,255,.800)"></div><div class="abs" style="left:18px;top:54px;width:2.9px;height:2.9px;border-radius:50%;background:rgba(255,255,255,.800)"></div><svg style="left:63px;top:63px" width="18" height="18"><use href="#dl" width="18" height="18"/></svg></div><div class="t" style="left:138px;top:408px;font-size:12.700px;color:#6b6b73;line-height:15px">Winter's Day</div><div class="abs" style="left:236px;top:316px;width:86px;height:86px;overflow:hidden;border-radius:7px 7px 7px 7px"><svg style="left:-1px;top:-1px;filter:blur(0.550px)" width="88" height="88"><use href="#girl" width="88" height="88"/></svg><svg style="left:63px;top:63px" width="18" height="18"><use href="#dl" width="18" height="18"/></svg></div><div class="t" style="left:240px;top:408px;font-size:12.700px;color:#6b6b73;line-height:15px">Xmas Stars</div><div class="abs" style="left:338px;top:316px;width:86px;height:86px;overflow:hidden;border-radius:7px 7px 7px 7px"><svg style="left:-1px;top:-1px;filter:blur(0.550px)" width="88" height="88"><use href="#girl" width="88" height="88"/></svg><svg style="left:63px;top:63px" width="18" height="18"><use href="#dl" width="18" height="18"/></svg></div><div class="t" style="left:342px;top:408px;font-size:12.700px;color:#6b6b73;line-height:15px">Christmas Star</div><div class="abs" style="left:440px;top:316px;width:86px;height:86px;overflow:hidden;border-radius:7px 7px 7px 7px"><svg style="left:-1px;top:-1px;filter:blur(0.550px)" width="88" height="88"><use href="#girl" width="88" height="88"/></svg><svg style="left:0;top:0" width="86" height="86" viewBox="0 0 86 86"><defs><pattern id="ckp" width="15" height="15" patternUnits="userSpaceOnUse" patternTransform="rotate(-4) translate(1 2)"><rect width="15" height="15" fill="#f3efd8"/><rect width="7.500" height="7.500" fill="#111"/><rect x="7.500" y="7.500" width="7.500" height="7.500" fill="#111"/></pattern></defs><path fill-rule="evenodd" fill="url(#ckp)" d="M0 0H86V86H0zM22 9C40 6 60 6 70 10c6 3 6 12 5 26s2 24-3 30c-6 5-30 8-48 7-10-1-13-6-13-20S9 24 12 16c2-5 5-6 10-7z"/></svg><div class="abs" style="left:1px;top:33px;width:11px;height:11px;border-radius:6px;background:#f2c82a"></div><div class="abs" style="left:64px;top:66px;width:20px;height:18px;border-radius:8px;background:#3b9a4e"></div><div class="t" style="left:68px;top:3px;font-size:11px;color:#f3cf2e">&#9733;</div><div class="t" style="left:24px;top:74px;font-size:11px;color:#f3cf2e">&#9733;</div><svg style="left:63px;top:63px" width="18" height="18"><use href="#dl" width="18" height="18"/></svg></div><div class="t" style="left:444px;top:408px;font-size:12.700px;color:#6b6b73;line-height:15px">Fleece Frame</div><div class="abs" style="left:542px;top:316px;width:86px;height:86px;overflow:hidden;border-radius:7px 7px 7px 7px"><svg style="left:-1px;top:-1px;filter:blur(0.550px)" width="88" height="88"><use href="#girl" width="88" height="88"/></svg><div class="abs" style="left:0;top:0;width:86px;height:86px;border-radius:7px;background:radial-gradient(circle at 50% 60%,rgba(235,220,212,.15),rgba(235,225,218,.8) 75%)"></div><svg style="left:63px;top:63px" width="18" height="18"><use href="#dl" width="18" height="18"/></svg></div><div class="t" style="left:546px;top:408px;font-size:12.700px;color:#6b6b73;line-height:15px">Kalei...ope 2</div><div class="abs" style="left:134px;top:433px;width:86px;height:10px;overflow:hidden;border-radius:7px 7px 0 0"><svg style="left:-1px;top:-1px;filter:blur(0.550px)" width="88" height="88"><use href="#girl" width="88" height="88"/></svg></div><div class="abs" style="left:236px;top:433px;width:86px;height:10px;overflow:hidden;border-radius:7px 7px 0 0"><svg style="left:-1px;top:-1px;filter:blur(0.550px)" width="88" height="88"><use href="#girl" width="88" height="88"/></svg></div><div class="abs" style="left:338px;top:433px;width:86px;height:10px;overflow:hidden;border-radius:7px 7px 0 0"><svg style="left:-1px;top:-1px;filter:blur(0.550px)" width="88" height="88"><use href="#girl" width="88" height="88"/></svg></div><div class="abs" style="left:440px;top:433px;width:86px;height:10px;overflow:hidden;border-radius:7px 7px 0 0"><svg style="left:-1px;top:-1px;filter:blur(0.550px)" width="88" height="88"><use href="#girl" width="88" height="88"/></svg></div><div class="abs" style="left:542px;top:433px;width:86px;height:10px;overflow:hidden;border-radius:7px 7px 0 0"><svg style="left:-1px;top:-1px;filter:blur(0.550px)" width="88" height="88"><use href="#girl" width="88" height="88"/></svg></div></div>
<div class="panel" style="left:668px;top:36px;width:424px;height:443px"><div class="phead"></div><div class="t cjk" style="left:11.500px;top:17px;font-size:12px;color:#ededed">播放器</div><div class="abs" style="left:394px;top:16px;width:13px;height:1.3px;background:#77777b;box-shadow:0 4.3px 0 #77777b,0 8.6px 0 #77777b"></div><div class="abs" style="left:8px;top:100px;width:408px;height:215px;overflow:hidden"><svg style="left:0;top:0" width="408" height="215" viewBox="0 0 408 215" preserveAspectRatio="none">
<defs>
<linearGradient id="vsky" x1="0" y1="0" x2="1" y2="0"><stop offset="0" stop-color="#e6ead0"/><stop offset="0.4" stop-color="#f3f2dc"/><stop offset="0.75" stop-color="#e3ecd8"/><stop offset="1" stop-color="#c9e0d2"/></linearGradient>
<linearGradient id="vgr" x1="0" y1="0" x2="0" y2="1"><stop offset="0.3" stop-color="#6a3a22"/><stop offset="0.55" stop-color="#44281e"/><stop offset="1" stop-color="#332c28"/></linearGradient>
<filter id="vb8" filterUnits="userSpaceOnUse" x="-60" y="-60" width="528" height="335"><feGaussianBlur stdDeviation="9"/></filter>
<filter id="vb4" filterUnits="userSpaceOnUse" x="-60" y="-60" width="528" height="335"><feGaussianBlur stdDeviation="2.6"/></filter>
<filter id="vb2" filterUnits="userSpaceOnUse" x="-60" y="-60" width="528" height="335"><feGaussianBlur stdDeviation="1.1"/></filter>
<linearGradient id="vbd" x1="0" y1="0" x2="0" y2="1"><stop offset="0" stop-color="#5c5044"/><stop offset="0.45" stop-color="#453c34"/><stop offset="1" stop-color="#2c2826"/></linearGradient>
<clipPath id="vcp"><rect width="408" height="215"/></clipPath>
</defs>
<g clip-path="url(#vcp)">
<rect x="-40" y="-40" width="488" height="295" fill="url(#vsky)"/>
<ellipse cx="112" cy="50" rx="70" ry="38" fill="#fcfaea" filter="url(#vb8)"/>
<rect x="340" y="60" width="120" height="26" fill="#b4d2c8" filter="url(#vb8)"/>
<g filter="url(#vb4)">
<path d="M-40 -40H18L34 12 48 30 62 56 80 80 100 84 130 72 150 62 200 70 226 80 248 78 262 64 296 70 326 86 370 88 448 92V260H-40z" fill="url(#vgr)"/>
<path d="M-40 -40H18L34 12 48 30 62 56 80 80 70 100 40 96 -40 84z" fill="#9c3f1d"/>
<path d="M-40 30L26 40 48 70 56 96 20 110 -40 100z" fill="#5c2a1c"/><path d="M-40 70L20 74 44 100 30 130 -40 140z" fill="#3c2822"/>
<path d="M20 4l12 10 10 18-8 6-16-20z" fill="#b8652e"/>
<path d="M-40 100L30 100 52 120 40 170-40 190z" fill="#33262200"/>
</g>
<ellipse cx="90" cy="108" rx="54" ry="42" fill="#cf8c34" filter="url(#vb8)"/>
<ellipse cx="72" cy="82" rx="16" ry="18" fill="#f0bc58" filter="url(#vb8)"/>
<g filter="url(#vb4)">
<path d="M96 84L130 72 150 62 200 70 226 82 214 98 180 106 120 110 100 100z" fill="#c79a40"/>
<path d="M96 90c20-12 50-16 72-10l-4 16-60 8z" fill="#f0d27e"/>
<path d="M150 62l50 8 26 12-30 6-40-8z" fill="#9a8540"/>
<path d="M226 80L248 78 262 64 296 70 326 86 310 100 240 96z" fill="#8a5a2c"/>
<path d="M258 66l22-2 20 8-16 6-24-4z" fill="#b09458"/>
<path d="M322 84L370 88 448 92V124L352 120 318 104z" fill="#8a3a22"/>
<path d="M340 96l60 4v14l-50-2z" fill="#a4462a"/>
<ellipse cx="262" cy="100.500" rx="27" ry="8.500" fill="#c6e4cc"/>
<ellipse cx="244" cy="100" rx="8" ry="6" fill="#e6e2a8"/>
<path d="M186 106L300 112 318 150 300 260H200L174 150z" fill="#33231d"/>
<path d="M172 102c30-6 64-4 84 6l-20 16-62-2z" fill="#5e2618"/>
<ellipse cx="143" cy="121" rx="24" ry="33" fill="#5e2616"/>
<path d="M122 104c8-13 32-15 42-2l-2 14-36 2z" fill="#904020"/>
<path d="M126 150h36v30h-36z" fill="#4a2418"/>
<path d="M30 164c30-14 66-14 98-8l34-4c30 4 50 16 58 36l-8 70H24z" fill="url(#vbd)"/>
<path d="M40 158c20-8 50-8 80-2l-4 8-70 4z" fill="#6e6252"/>
<path d="M174 150c20-6 42 6 48 24l-6 22-36-8z" fill="#6b8f78"/>
<ellipse cx="340" cy="146" rx="32" ry="42" fill="#27211e"/>
<path d="M226 190c20-22 150-30 222-8v90H216z" fill="#2b2926"/>
<path d="M-40 200L30 170 40 184-40 236z" fill="#a4461f"/>
<path d="M-40 110L30 104 50 128 30 166-40 192z" fill="#34272300"/>
<path d="M-40 214l60-22 10 10-30 30z" fill="#3a3f4c"/>
<ellipse cx="296" cy="168" rx="22" ry="15" fill="#74733a" opacity=".75"/>
<path d="M372 140l76 14v26l-78-22z" fill="#b85a2c" opacity=".85"/>
<path d="M376 148l72 18v10l-72-20z" fill="#7fb0a0" opacity=".75"/>
</g>
<g filter="url(#vb2)">
<path d="M36 146c20-10 48-10 64-5" stroke="#f2d78e" stroke-width="14" stroke-linecap="round" fill="none" opacity=".95"/>
<path d="M62 156c14 2 26 2 38 0" stroke="#ead9a6" stroke-width="12" stroke-linecap="round" fill="none" opacity=".9"/>
<circle cx="64" cy="120" r="12" fill="#e4ab40" opacity=".9"/>
<circle cx="94" cy="128" r="11" fill="#e6dcc4" opacity=".85"/>
<circle cx="110" cy="117" r="7" fill="#f3e3a8" opacity=".9"/>
<path d="M110 108c2-14 10-22 24-28" stroke="#f0d48a" stroke-width="11" stroke-linecap="round" fill="none" opacity=".8"/>
<circle cx="112" cy="161" r="8" fill="#e3b64a" opacity=".9"/>
<circle cx="124" cy="153" r="7" fill="#e6cf8a" opacity=".9"/>
<circle cx="180" cy="124" r="8" fill="#e2a63c" opacity=".9"/>
<circle cx="172" cy="132" r="6" fill="#e9bf62" opacity=".9"/>
<circle cx="166" cy="138" r="6" fill="none" stroke="#c94a3a" stroke-width="2.500" opacity=".9"/>
<circle cx="116" cy="136" r="6" fill="none" stroke="#b8442e" stroke-width="2.500" opacity=".8"/>
<circle cx="177" cy="159" r="6" fill="none" stroke="#dcd08a" stroke-width="3" opacity=".95"/>
<circle cx="200" cy="86" r="12" fill="#e0a63a" opacity=".85"/>
<path d="M284 142c2-18 12-34 28-44" stroke="#ecc25a" stroke-width="16" stroke-linecap="round" fill="none" opacity=".95"/>
<circle cx="280" cy="146" r="9" fill="#e8b53e" opacity=".95"/>
<circle cx="296" cy="150" r="8" fill="#e3a93a" opacity=".85"/>
<circle cx="378" cy="124" r="7" fill="none" stroke="#d2414a" stroke-width="3.200" opacity=".95"/>
<circle cx="397" cy="113" r="7" fill="none" stroke="#d2414a" stroke-width="3.200" opacity=".9"/>
<circle cx="319" cy="178" r="7" fill="none" stroke="#c23a34" stroke-width="3.400" opacity=".9"/>
</g>
</g></svg></div><div class="t" style="left:8px;top:411px;font-size:12px;color:#1fb4d0;letter-spacing:0.150px">00:00:00:00</div><div class="t" style="left:78.500px;top:411px;font-size:12px;color:#3a3a3c">/</div><div class="t" style="left:85px;top:411px;font-size:12px;color:#e4e4e4;letter-spacing:0.150px">00:00:05:00</div><div class="abs" style="left:161px;top:409.0px;width:10px;height:3px;background:#2f2f32"></div><div class="abs" style="left:161px;top:413.2px;width:10px;height:3px;background:#2f2f32"></div><div class="abs" style="left:161px;top:417.4px;width:10px;height:3px;background:#2f2f32"></div><div class="abs" style="left:161px;top:421.6px;width:10px;height:3px;background:#2f2f32"></div><div class="abs" style="left:173px;top:409.0px;width:10px;height:3px;background:#2f2f32"></div><div class="abs" style="left:173px;top:413.2px;width:10px;height:3px;background:#2f2f32"></div><div class="abs" style="left:173px;top:417.4px;width:10px;height:3px;background:#2f2f32"></div><div class="abs" style="left:173px;top:421.6px;width:10px;height:3px;background:#2f2f32"></div><svg style="left:207px;top:410px" width="12" height="14" viewBox="0 0 12 14"><path d="M0.6 0.6v12.8L11 7z" fill="#d9d9d9"/></svg><svg style="left:323px;top:409px" width="18" height="17" viewBox="0 0 18 17"><path d="M1 5V1.2h4M13 1.2h4V5M17 12v3.8h-4M5 15.800H1V12" fill="none" stroke="#d4d4d4" stroke-width="1.4"/><circle cx="8.7" cy="8.2" r="4.3" fill="none" stroke="#d4d4d4" stroke-width="1.4"/><path d="M11.8 11.400l2.400 2.400" stroke="#d4d4d4" stroke-width="1.4"/></svg><div class="abs" style="left:354px;top:410px;width:31px;height:14px;border:1.3px solid #dcdcdc;border-radius:1px"></div><div class="t" style="left:357px;top:411.5px;font-size:11px;color:#e0e0e0;letter-spacing:0.1px">Ratio</div><div class="abs" style="left:393px;top:413px;width:1px;height:8px;background:#333"></div><svg style="left:402px;top:410px" width="15" height="14" viewBox="0 0 15 14"><path d="M0.8 4.500V0.8h3.6M10.600 13.200h3.600V9.500" fill="none" stroke="#d4d4d4" stroke-width="1.4" stroke-dasharray="0"/><path d="M0.8 9.500v3.700h3.600M10.600 0.8h3.600v3.700" fill="none" stroke="#d4d4d4" stroke-width="1.4"/><path d="M14 1L8.600 6.200M1 13l5.400-5.200M1 13v-3.400M1 13h3.400" fill="none" stroke="#d4d4d4" stroke-width="1.3"/></svg></div>
<div class="panel" style="left:1099px;top:36px;width:376px;height:443px"><div class="phead"></div><div class="t cjk cy" style="left:11px;top:17px;font-size:12px">特效</div><div class="t cjk" style="left:12px;top:65px;font-size:12px;font-weight:700;color:#f4f4f4">特效参数</div><svg style="left:64px;top:66px" width="7" height="5" viewBox="0 0 7 5"><path d="M0.300 4.500h6.400L3.500 0.600z" fill="#4a4840"/></svg><svg style="left:1310px;top:99px;left:310px;top:62px" width="14" height="14" viewBox="0 0 14 14"><path d="M2.600 4.200A5.400 5.400 0 1 1 1.800 8.400" fill="none" stroke="#7a7a7e" stroke-width="1.2"/><path d="M2.200 1.200v3.400h3.400" fill="none" stroke="#7a7a7e" stroke-width="1.2"/></svg><svg style="left:341px;top:62px" width="14" height="14" viewBox="0 0 14 14"><path d="M7 1.2L12.800 7 7 12.800 1.200 7z" fill="none" stroke="#dcdcdc" stroke-width="1.2" stroke-linejoin="round"/></svg><svg style="left:333px;top:65px" width="5" height="8" viewBox="0 0 5 8"><path d="M4.300 0.500L1 4l3.300 3.500" fill="none" stroke="#2a2a2d" stroke-width="1.1"/></svg><svg style="left:358px;top:65px" width="5" height="8" viewBox="0 0 5 8"><path d="M0.700 0.500L4 4 0.700 7.500" fill="none" stroke="#2a2a2d" stroke-width="1.1"/></svg><div class="t cjk" style="left:12px;top:103px;font-size:11.500px;color:#c9c9c9">名称</div><div class="t" style="left:62px;top:100.500px;font-size:12px;color:#ececec">example effect</div><div class="t" style="left:12px;top:133px;font-size:12.500px;color:#e4e4e4;letter-spacing:0.1px">Strength</div><div class="abs" style="left:12px;top:156px;width:225px;height:2px;background:#2f2f33;border-radius:1px"></div><div class="abs" style="left:12px;top:156px;width:178px;height:2px;background:#f2f2f2;border-radius:1px"></div><div class="abs" style="left:186px;top:151px;width:8px;height:12px;background:#fafafa;border-radius:4px"></div><div class="abs" style="left:256px;top:146px;width:54px;height:22px;background:#2f2f33;border-radius:5px"></div><div class="t" style="left:256px;top:151.7px;width:54px;text-align:center;font-size:12.5px;color:#f0f0f0">80</div><div class="abs" style="left:312px;top:146px;width:16px;height:22px;background:#2f2f33;border-radius:4px"></div><svg style="left:316px;top:150px" width="8" height="14" viewBox="0 0 8 14"><path d="M0.800 5L4 1.800 7.200 5M0.800 9L4 12.200 7.200 9" fill="none" stroke="#8f8f8f" stroke-width="1.3"/></svg><svg style="left:341px;top:150px" width="14" height="14" viewBox="0 0 14 14"><path d="M7 1.2L12.800 7 7 12.800 1.200 7z" fill="none" stroke="#dcdcdc" stroke-width="1.2" stroke-linejoin="round"/></svg><svg style="left:333px;top:153px" width="5" height="8" viewBox="0 0 5 8"><path d="M4.300 0.500L1 4l3.300 3.500" fill="none" stroke="#2a2a2d" stroke-width="1.1"/></svg><svg style="left:358px;top:153px" width="5" height="8" viewBox="0 0 5 8"><path d="M0.700 0.500L4 4 0.700 7.500" fill="none" stroke="#2a2a2d" stroke-width="1.1"/></svg><div class="t" style="left:12px;top:179px;font-size:12.500px;color:#e4e4e4;letter-spacing:0.1px">Speed</div><div class="abs" style="left:12px;top:202px;width:225px;height:2px;background:#2f2f33;border-radius:1px"></div><div class="abs" style="left:12px;top:202px;width:76px;height:2px;background:#f2f2f2;border-radius:1px"></div><div class="abs" style="left:84px;top:197px;width:8px;height:12px;background:#fafafa;border-radius:4px"></div><div class="abs" style="left:256px;top:192px;width:54px;height:22px;background:#2f2f33;border-radius:5px"></div><div class="t" style="left:256px;top:197.7px;width:54px;text-align:center;font-size:12.5px;color:#f0f0f0">33</div><div class="abs" style="left:312px;top:192px;width:16px;height:22px;background:#2f2f33;border-radius:4px"></div><svg style="left:316px;top:196px" width="8" height="14" viewBox="0 0 8 14"><path d="M0.800 5L4 1.800 7.200 5M0.800 9L4 12.200 7.200 9" fill="none" stroke="#8f8f8f" stroke-width="1.3"/></svg><svg style="left:341px;top:196px" width="14" height="14" viewBox="0 0 14 14"><path d="M7 1.2L12.800 7 7 12.800 1.200 7z" fill="none" stroke="#dcdcdc" stroke-width="1.2" stroke-linejoin="round"/></svg><svg style="left:333px;top:199px" width="5" height="8" viewBox="0 0 5 8"><path d="M4.300 0.500L1 4l3.300 3.500" fill="none" stroke="#2a2a2d" stroke-width="1.1"/></svg><svg style="left:358px;top:199px" width="5" height="8" viewBox="0 0 5 8"><path d="M0.700 0.500L4 4 0.700 7.500" fill="none" stroke="#2a2a2d" stroke-width="1.1"/></svg></div>
<svg width="0" height="0" style="position:absolute"><defs>
<filter id="fb" x="-10%" y="-10%" width="120%" height="120%"><feGaussianBlur stdDeviation="0.650"/></filter>
<symbol id="fr" viewBox="0 0 50 37"><rect width="50" height="37" fill="#f3efcd"/>
<g>
<rect x="-2" y="-2" width="54" height="12" fill="#f4f0d0"/>
<rect x="31" y="-2" width="22" height="10" fill="#d6e6d3"/>
<path d="M-2 9l8-1 10 1 10-1 8 1 8-2 10 2v30H-2z" fill="#4a2e24"/>
<path d="M-2 7c6-1 12 0 16 2l10 0 2 5-12 2-6 6-10 0z" fill="#e3a236"/>
<ellipse cx="9" cy="11" rx="7" ry="3.500" fill="#f3d682"/>
<path d="M24 9l10-1 8 2v5H24z" fill="#7a4a2a"/>
<ellipse cx="14" cy="18.500" rx="6.300" ry="7" fill="#98391a"/>
<path d="M22 16.500h18v5.500H22z" fill="#6c2a20"/>
<path d="M23 15.800h14" stroke="#d8c8a8" stroke-width="0.800"/>
<path d="M41 9l6-1 5 2v28H40z" fill="#35261f"/>
<path d="M37.500 29c0-6 2-10 5-14" stroke="#f0b040" stroke-width="2.600" fill="none" stroke-linecap="round"/>
<path d="M-2 27c8-3 20-3 30 0v12H-2z" fill="#5c4c3e"/>
<path d="M1 25l5 1 0 3-5 1z" fill="#7f957f"/>
<path d="M26 24h16v14H26z" fill="#33241f"/>
<ellipse cx="3" cy="15" rx="3" ry="5" fill="#d98f2c"/>
</g></symbol></defs></svg><div class="panel" style="left:9px;top:485px;width:1466px;height:370px"><div class="abs" style="left:0;top:0;width:1466px;height:32px;background:#28282c"></div><div class="abs" style="left:0;top:32px;width:1466px;height:1px;background:#121213"></div><div class="abs" style="left:111px;top:33px;width:1px;height:337px;background:#252527"></div><svg style="left:10px;top:8px" width="14" height="17" viewBox="0 0 14 17"><path d="M1.200 1.400v11.800l3.300-2.800 2.100 4.900 2.200-1-2.100-4.700 4.300-0.300z" fill="none" stroke="#e2e2e2" stroke-width="1.400" stroke-linejoin="round"/></svg><svg style="left:34px;top:14px" width="9" height="6" viewBox="0 0 9 6"><path d="M1 1l3.500 3.500L8 1" fill="none" stroke="#9a9a9e" stroke-width="1.400"/></svg><div class="abs" style="left:56px;top:8px;width:1px;height:16px;background:#3f4a40"></div><svg style="left:69px;top:8px" width="14" height="15" viewBox="0 0 14 15"><path d="M1.600 4.600h7.200a4.100 4.100 0 0 1 0 8.200H2.600" fill="none" stroke="#e2e2e2" stroke-width="1.400"/><path d="M4.600 1.400L1.400 4.600l3.200 3.200" fill="none" stroke="#e2e2e2" stroke-width="1.400"/></svg><svg style="left:109px;top:8px" width="14" height="15" viewBox="0 0 14 15"><path d="M12.400 4.600H5.200a4.100 4.100 0 0 0 0 8.200h6.200" fill="none" stroke="#3c3c40" stroke-width="1.400"/><path d="M9.400 1.400l3.200 3.200-3.200 3.200" fill="none" stroke="#3c3c40" stroke-width="1.400"/></svg><svg style="left:151px;top:9px" width="11" height="14" viewBox="0 0 11 14"><path d="M0.400 1.200h3.400v11.600H0.400M10.600 1.200H7.200v11.600h3.400" fill="none" stroke="#e2e2e2" stroke-width="1.600"/></svg><svg style="left:191px;top:9px" width="11" height="14" viewBox="0 0 11 14"><path d="M0.400 1.200h3.400M0.400 12.800h3.400" stroke="#e2e2e2" stroke-width="1.600"/><path d="M3.400 1.200v11.600" stroke="#e2e2e2" stroke-width="1.500" stroke-dasharray="1.200 1"/><path d="M10.600 1.200H7.200v11.600h3.400" fill="none" stroke="#e2e2e2" stroke-width="1.600"/></svg><svg style="left:231px;top:9px" width="11" height="14" viewBox="0 0 11 14"><path d="M0.400 1.200h3.400v11.600H0.400" fill="none" stroke="#e2e2e2" stroke-width="1.600"/><path d="M10.600 1.200H7.200M10.600 12.800H7.200" stroke="#e2e2e2" stroke-width="1.600"/><path d="M7.600 1.200v11.600" stroke="#e2e2e2" stroke-width="1.500" stroke-dasharray="1.200 1"/></svg><svg style="left:269px;top:8px" width="14" height="15" viewBox="0 0 14 15"><path d="M0.400 2.800h13.200M5.400 2.600V0.800h3.200v1.800" fill="none" stroke="#e2e2e2" stroke-width="1.500"/><rect x="2.400" y="3" width="9.200" height="10.800" fill="none" stroke="#e2e2e2" stroke-width="1.600"/></svg><svg style="left:1070px;top:8px" width="13" height="16" viewBox="0 0 13 16"><rect x="3.600" y="0.800" width="5.800" height="9" rx="1.400" fill="none" stroke="#e2e2e2" stroke-width="1.400"/><path d="M1 7.800v3.800h11V7.800M6.500 11.600v3M3.600 14.900h5.800" fill="none" stroke="#e2e2e2" stroke-width="1.300"/></svg><div class="abs" style="left:1104px;top:8px;width:1px;height:16px;background:#333336"></div><div class="abs" style="left:1121px;top:4px;width:24px;height:24px;border-radius:4px;background:#1b1b1d"></div><div class="abs" style="left:1161px;top:4px;width:24px;height:24px;border-radius:4px;background:#1b1b1d"></div><div class="abs" style="left:1201px;top:4px;width:24px;height:24px;border-radius:4px;background:#1b1b1d"></div><svg style="left:1124px;top:12px" width="18" height="8" viewBox="0 0 18 8"><rect x="0" y="0.500" width="7" height="7" rx="1" fill="#20c4d4"/><rect x="11" y="0.500" width="7" height="7" rx="1" fill="#20c4d4"/><path d="M6 4h6M8.500 2.400L7 4l1.500 1.600" stroke="#20c4d4" stroke-width="1.200" fill="none"/><rect x="12.600" y="3.200" width="3" height="1.600" fill="#1b1b1d"/></svg><svg style="left:1163px;top:7px" width="20" height="18" viewBox="0 0 20 18"><rect x="1" y="5.500" width="18" height="7" rx="1.200" fill="#20c4d4"/><rect x="9.200" y="6.600" width="1.600" height="4.800" fill="#1b1b1d"/><path d="M10 0.500v2.600M5.600 1.400l1.400 2.200M14.400 1.400L13 3.600M10 17.500v-2.600M5.600 16.600L7 14.400M14.400 16.600L13 14.400" stroke="#20c4d4" stroke-width="1.200"/></svg><svg style="left:1204px;top:12px" width="18" height="8" viewBox="0 0 18 8"><rect x="0" y="0.500" width="18" height="7" rx="1.200" fill="#20c4d4"/><rect x="3.400" y="2.600" width="4.600" height="2.800" rx="1" fill="none" stroke="#1b1b1d" stroke-width="1.100"/><rect x="10" y="2.600" width="4.600" height="2.800" rx="1" fill="none" stroke="#1b1b1d" stroke-width="1.100"/><path d="M7 4h4" stroke="#1b1b1d" stroke-width="1.100"/></svg><svg style="left:1244px;top:8px" width="18" height="16" viewBox="0 0 18 16"><path d="M6.600 4.600H0.800v6.800h5.800M11.400 4.600h5.800v6.800h-5.800" fill="none" stroke="#e2e2e2" stroke-width="1.500"/><path d="M9 0.500v15" stroke="#e2e2e2" stroke-width="1.500"/></svg><div class="abs" style="left:1273px;top:8px;width:1px;height:16px;background:#333336"></div><svg style="left:1285px;top:9px" width="18" height="14" viewBox="0 0 18 14"><path d="M8.500 9.200H0.800V1h15.600v5" fill="none" stroke="#e2e2e2" stroke-width="1.400"/><path d="M3.600 1v2.600M6.200 1v2M8.800 1v2.600M11.400 1v2M14 1v2.600" stroke="#e2e2e2" stroke-width="1"/><circle cx="12" cy="8.600" r="3" fill="none" stroke="#e2e2e2" stroke-width="1.300"/><path d="M14.200 10.800l2.200 2.200" stroke="#e2e2e2" stroke-width="1.300"/></svg><svg style="left:1315px;top:9px" width="15" height="15" viewBox="0 0 15 15"><circle cx="6.800" cy="7" r="5.600" fill="none" stroke="#e2e2e2" stroke-width="1.400"/><path d="M4.200 7h5.200M10.800 11l2.600 2.600" stroke="#e2e2e2" stroke-width="1.400"/></svg><div class="abs" style="left:1338px;top:15px;width:95px;height:2px;background:#333337"></div><div class="abs" style="left:1338px;top:15px;width:18px;height:2px;background:#f0f0f0"></div><div class="abs" style="left:1351px;top:10px;width:8px;height:12px;border-radius:4px;background:#fafafa"></div><svg style="left:1443px;top:9px" width="15" height="15" viewBox="0 0 15 15"><circle cx="6.800" cy="7" r="5.600" fill="none" stroke="#e2e2e2" stroke-width="1.400"/><path d="M4.200 7h5.200M6.800 4.400v5.200M10.800 11l2.600 2.600" stroke="#e2e2e2" stroke-width="1.400"/></svg><div class="t" style="left:167.5px;top:37px;font-size:10.500px;color:#5d635d;letter-spacing:0.050px">00:00</div><div class="abs" style="left:390.5px;top:37px;width:1px;height:10px;background:#6c6c6c"></div><div class="t" style="left:395.5px;top:37px;font-size:10.500px;color:#5d635d;letter-spacing:0.050px">00:02</div><div class="abs" style="left:619.5px;top:37px;width:1px;height:10px;background:#6c6c6c"></div><div class="t" style="left:624.5px;top:37px;font-size:10.500px;color:#5d635d;letter-spacing:0.050px">00:04</div><div class="abs" style="left:847.5px;top:37px;width:1px;height:10px;background:#6c6c6c"></div><div class="t" style="left:852.5px;top:37px;font-size:10.500px;color:#5d635d;letter-spacing:0.050px">00:06</div><div class="abs" style="left:1076.5px;top:37px;width:1px;height:10px;background:#6c6c6c"></div><div class="t" style="left:1081.5px;top:37px;font-size:10.500px;color:#5d635d;letter-spacing:0.050px">00:08</div><div class="abs" style="left:1304.5px;top:37px;width:1px;height:10px;background:#6c6c6c"></div><div class="t" style="left:1309.5px;top:37px;font-size:10.500px;color:#5d635d;letter-spacing:0.050px">00:10</div><div class="abs" style="left:184.5px;top:37px;width:1px;height:5px;background:#38383a"></div><div class="abs" style="left:207.5px;top:37px;width:1px;height:5px;background:#38383a"></div><div class="abs" style="left:230.5px;top:37px;width:1px;height:5px;background:#38383a"></div><div class="abs" style="left:253.5px;top:37px;width:1px;height:5px;background:#38383a"></div><div class="abs" style="left:276.5px;top:37px;width:1px;height:5px;background:#38383a"></div><div class="abs" style="left:299.5px;top:37px;width:1px;height:5px;background:#38383a"></div><div class="abs" style="left:322.5px;top:37px;width:1px;height:5px;background:#38383a"></div><div class="abs" style="left:344.5px;top:37px;width:1px;height:5px;background:#38383a"></div><div class="abs" style="left:367.5px;top:37px;width:1px;height:5px;background:#38383a"></div><div class="abs" style="left:413.5px;top:37px;width:1px;height:5px;background:#38383a"></div><div class="abs" style="left:436.5px;top:37px;width:1px;height:5px;background:#38383a"></div><div class="abs" style="left:459.5px;top:37px;width:1px;height:5px;background:#38383a"></div><div class="abs" style="left:482.5px;top:37px;width:1px;height:5px;background:#38383a"></div><div class="abs" style="left:504.5px;top:37px;width:1px;height:5px;background:#38383a"></div><div class="abs" style="left:527.5px;top:37px;width:1px;height:5px;background:#38383a"></div><div class="abs" style="left:550.5px;top:37px;width:1px;height:5px;background:#38383a"></div><div class="abs" style="left:573.5px;top:37px;width:1px;height:5px;background:#38383a"></div><div class="abs" style="left:596.5px;top:37px;width:1px;height:5px;background:#38383a"></div><div class="abs" style="left:642.5px;top:37px;width:1px;height:5px;background:#38383a"></div><div class="abs" style="left:664.5px;top:37px;width:1px;height:5px;background:#38383a"></div><div class="abs" style="left:687.5px;top:37px;width:1px;height:5px;background:#38383a"></div><div class="abs" style="left:710.5px;top:37px;width:1px;height:5px;background:#38383a"></div><div class="abs" style="left:733.5px;top:37px;width:1px;height:5px;background:#38383a"></div><div class="abs" style="left:756.5px;top:37px;width:1px;height:5px;background:#38383a"></div><div class="abs" style="left:779.5px;top:37px;width:1px;height:5px;background:#38383a"></div><div class="abs" style="left:802.5px;top:37px;width:1px;height:5px;background:#38383a"></div><div class="abs" style="left:824.5px;top:37px;width:1px;height:5px;background:#38383a"></div><div class="abs" style="left:870.5px;top:37px;width:1px;height:5px;background:#38383a"></div><div class="abs" style="left:893.5px;top:37px;width:1px;height:5px;background:#38383a"></div><div class="abs" style="left:916.5px;top:37px;width:1px;height:5px;background:#38383a"></div><div class="abs" style="left:939.5px;top:37px;width:1px;height:5px;background:#38383a"></div><div class="abs" style="left:962.5px;top:37px;width:1px;height:5px;background:#38383a"></div><div class="abs" style="left:984.5px;top:37px;width:1px;height:5px;background:#38383a"></div><div class="abs" style="left:1007.5px;top:37px;width:1px;height:5px;background:#38383a"></div><div class="abs" style="left:1030.5px;top:37px;width:1px;height:5px;background:#38383a"></div><div class="abs" style="left:1053.5px;top:37px;width:1px;height:5px;background:#38383a"></div><div class="abs" style="left:1099.5px;top:37px;width:1px;height:5px;background:#38383a"></div><div class="abs" style="left:1122.5px;top:37px;width:1px;height:5px;background:#38383a"></div><div class="abs" style="left:1144.5px;top:37px;width:1px;height:5px;background:#38383a"></div><div class="abs" style="left:1167.5px;top:37px;width:1px;height:5px;background:#38383a"></div><div class="abs" style="left:1190.5px;top:37px;width:1px;height:5px;background:#38383a"></div><div class="abs" style="left:1213.5px;top:37px;width:1px;height:5px;background:#38383a"></div><div class="abs" style="left:1236.5px;top:37px;width:1px;height:5px;background:#38383a"></div><div class="abs" style="left:1259.5px;top:37px;width:1px;height:5px;background:#38383a"></div><div class="abs" style="left:1282.5px;top:37px;width:1px;height:5px;background:#38383a"></div><div class="abs" style="left:1327.5px;top:37px;width:1px;height:5px;background:#38383a"></div><div class="abs" style="left:1350.5px;top:37px;width:1px;height:5px;background:#38383a"></div><div class="abs" style="left:1373.5px;top:37px;width:1px;height:5px;background:#38383a"></div><div class="abs" style="left:1396.5px;top:37px;width:1px;height:5px;background:#38383a"></div><div class="abs" style="left:1419.5px;top:37px;width:1px;height:5px;background:#38383a"></div><div class="abs" style="left:1442.5px;top:37px;width:1px;height:5px;background:#38383a"></div><div class="abs" style="left:171px;top:34px;width:562px;height:2px;background:repeating-linear-gradient(90deg,#b0b0b0 0 2px,transparent 2px 8px)"></div><div class="abs" style="left:4px;top:137px;width:100px;height:24.5px;border-radius:4px;background:#1f1f21"></div><div class="abs" style="left:4px;top:191.5px;width:100px;height:24.0px;border-radius:4px;background:#1f1f21"></div><svg style="left:11px;top:142px" width="15" height="15" viewBox="0 0 22 22"><path d="M8.600 2.200l3.300 3.600 4.900-0.900-2.300 4.400 2.400 4.300-4.900-0.800-3.400 3.600-0.700-4.900-4.500-2.100 4.500-2.200z" fill="none" stroke="#9a9a8e" stroke-width="1.700" stroke-linejoin="round"/><path d="M14.800 14.200l3.400 4" stroke="#9a9a8e" stroke-width="1.700" stroke-linecap="round"/></svg><div class="abs" style="left:34px;top:141.5px;width:16px;height:16px;border-radius:8px;background:#2e2e31"></div><svg style="left:37px;top:143.5px" width="10" height="11" viewBox="0 0 10 11"><rect x="1.2" y="4.800" width="7.600" height="5.200" rx="1" fill="#dcdcdc"/><path d="M2.900 5V3.400a2.100 2.100 0 0 1 4.200 0V5" fill="none" stroke="#dcdcdc" stroke-width="1.2"/><rect x="3" y="6.600" width="4" height="1.200" fill="#2b2b2e"/></svg><div class="abs" style="left:58px;top:141.5px;width:16px;height:16px;border-radius:8px;background:#2e2e31"></div><svg style="left:60px;top:145.5px" width="12" height="8" viewBox="0 0 12 8"><path d="M0.600 4C2 1.600 4 0.700 6 0.700S10 1.600 11.400 4C10 6.400 8 7.300 6 7.300S2 6.400 0.600 4z" fill="none" stroke="#dcdcdc" stroke-width="1.100"/><circle cx="6" cy="4" r="2" fill="#dcdcdc"/></svg><div class="abs" style="left:82px;top:141.5px;width:16px;height:16px;border-radius:8px;background:#242426"></div><svg style="left:12px;top:198.5px" width="13" height="10" viewBox="0 0 13 10"><rect x="0.600" y="0.600" width="11.800" height="8.800" fill="none" stroke="#a0a0a0" stroke-width="1"/><path d="M5 3v4l3.200-2z" fill="#a0a0a0"/></svg><div class="abs" style="left:34px;top:195.5px;width:16px;height:16px;border-radius:8px;background:#2e2e31"></div><svg style="left:37px;top:197.5px" width="10" height="11" viewBox="0 0 10 11"><rect x="1.2" y="4.800" width="7.600" height="5.200" rx="1" fill="#dcdcdc"/><path d="M2.900 5V3.400a2.100 2.100 0 0 1 4.200 0V5" fill="none" stroke="#dcdcdc" stroke-width="1.2"/><rect x="3" y="6.600" width="4" height="1.200" fill="#2b2b2e"/></svg><div class="abs" style="left:58px;top:195.5px;width:16px;height:16px;border-radius:8px;background:#2e2e31"></div><svg style="left:60px;top:199.5px" width="12" height="8" viewBox="0 0 12 8"><path d="M0.600 4C2 1.600 4 0.700 6 0.700S10 1.600 11.400 4C10 6.400 8 7.300 6 7.300S2 6.400 0.600 4z" fill="none" stroke="#dcdcdc" stroke-width="1.100"/><circle cx="6" cy="4" r="2" fill="#dcdcdc"/></svg><div class="abs" style="left:82px;top:195.5px;width:16px;height:16px;border-radius:8px;background:#2e2e31"></div><svg style="left:84px;top:198.5px" width="12" height="10" viewBox="0 0 12 10"><path d="M0.800 3.400h2L5.600 1v8L2.800 6.600h-2z" fill="none" stroke="#dcdcdc" stroke-width="1.100" stroke-linejoin="round"/><path d="M7.400 3.200c0.800 1 0.800 2.600 0 3.600M9.200 1.800c1.600 1.800 1.600 4.600 0 6.400" fill="none" stroke="#dcdcdc" stroke-width="1.100"/></svg><div class="abs" style="left:116px;top:184px;width:38px;height:38px;border-radius:5px;background:#2a2a2d radial-gradient(#202022 0.600px,transparent 0.900px) 0 0/3px 3px"></div><svg style="left:128px;top:195px" width="14" height="16" viewBox="0 0 14 16"><path d="M2 9.600L8.800 2.400l2.600 2.400L4.600 12H2z" fill="none" stroke="#e2e2e2" stroke-width="1.300" stroke-linejoin="round"/><path d="M1.200 14.600h11" stroke="#e2e2e2" stroke-width="1.400"/></svg><div class="abs" style="left:159px;top:137px;width:1301px;height:24px;background:#252527 radial-gradient(#212123 0.600px,transparent 0.900px) 0 0/4px 4px;border-radius:3px"></div><div class="abs" style="left:159px;top:165px;width:1301px;height:76px;background:#1e1e1f;border-radius:3px"></div><div class="abs" style="left:159px;top:139px;width:348px;height:21px;background:#744a84;border:1.500px solid #f4f4f4;border-left-width:3px;border-right-width:2.500px;border-radius:4px"></div><svg style="left:167px;top:143px" width="13" height="13" viewBox="0 0 22 22"><path d="M8.600 2.200l3.300 3.600 4.900-0.900-2.300 4.400 2.400 4.300-4.900-0.800-3.400 3.600-0.700-4.900-4.500-2.100 4.500-2.200z" fill="none" stroke="#f0e8f4" stroke-width="2.200" stroke-linejoin="round"/><path d="M14.800 14.200l3.400 4" stroke="#f0e8f4" stroke-width="2.200" stroke-linecap="round"/></svg><div class="abs" style="left:164px;top:141.5px;width:15px;height:16px;border-radius:2px;background:rgba(255,255,255,.090)"></div><div class="abs" style="left:181px;top:141.5px;width:83px;height:16px;border-radius:2px;background:rgba(255,255,255,.090)"></div><div class="t" style="left:184px;top:144.5px;font-size:12px;color:#f6f2f8">example effect</div><div class="abs" style="left:162px;top:168px;width:571px;height:72px;background:#004e54;border-radius:4px;overflow:hidden"><div class="abs" style="left:0;top:18px;width:571px;height:37px;background:#4a3326"><svg style="left:0;top:0;filter:blur(0.800px)" width="571" height="37"><use href="#fr" x="1" y="0" width="50" height="37"/><use href="#fr" x="51" y="0" width="50" height="37"/><use href="#fr" x="101" y="0" width="50" height="37"/><use href="#fr" x="151" y="0" width="50" height="37"/><path d="M177 -1l2.500 10" stroke="#a8361e" stroke-width="2.600" stroke-linecap="round"/><use href="#fr" x="201" y="0" width="50" height="37"/><path d="M227 -1l2.500 10" stroke="#a8361e" stroke-width="2.600" stroke-linecap="round"/><use href="#fr" x="251" y="0" width="50" height="37"/><path d="M277 -1l2.500 10" stroke="#a8361e" stroke-width="2.600" stroke-linecap="round"/><use href="#fr" x="301" y="0" width="50" height="37"/><path d="M327 -1l2.500 10" stroke="#a8361e" stroke-width="2.600" stroke-linecap="round"/><use href="#fr" x="351" y="0" width="50" height="37"/><path d="M377 -1l2.500 10" stroke="#a8361e" stroke-width="2.600" stroke-linecap="round"/><use href="#fr" x="401" y="0" width="50" height="37"/><path d="M427 -1l2.500 10" stroke="#a8361e" stroke-width="2.600" stroke-linecap="round"/><use href="#fr" x="451" y="0" width="50" height="37"/><path d="M477 -1l2.500 10" stroke="#a8361e" stroke-width="2.600" stroke-linecap="round"/><use href="#fr" x="501" y="0" width="50" height="37"/><path d="M527 -1l2.500 10" stroke="#a8361e" stroke-width="2.600" stroke-linecap="round"/><use href="#fr" x="551" y="0" width="50" height="37"/><path d="M577 -1l2.500 10" stroke="#a8361e" stroke-width="2.600" stroke-linecap="round"/></svg></div><div class="abs" style="left:3px;top:2px;width:75px;height:14px;background:rgba(255,255,255,.06);border-radius:2px"></div><div class="abs" style="left:82px;top:2px;width:62px;height:14px;background:rgba(255,255,255,.06);border-radius:2px"></div><div class="t" style="left:6px;top:3.500px;font-size:11.500px;color:#f0f0f0">example.mp4</div><div class="t" style="left:85px;top:4px;font-size:11px;color:#f0f0f0;letter-spacing:-0.200px">00:00:05:00</div></div><div class="abs" style="left:161px;top:45px;width:2px;height:311px;background:#bcbcbc"></div><svg style="left:157px;top:33px" width="10" height="15" viewBox="0 0 10 15"><path d="M1 1h8v8.500c0 2.400-1.600 4-4 4s-4-1.600-4-4z" fill="#1b1b1c" stroke="#fafafa" stroke-width="2"/></svg><div class="abs" style="left:114px;top:362px;width:1344px;height:6px;border-radius:3px;background:#36363a"></div></div>
</body></html>
